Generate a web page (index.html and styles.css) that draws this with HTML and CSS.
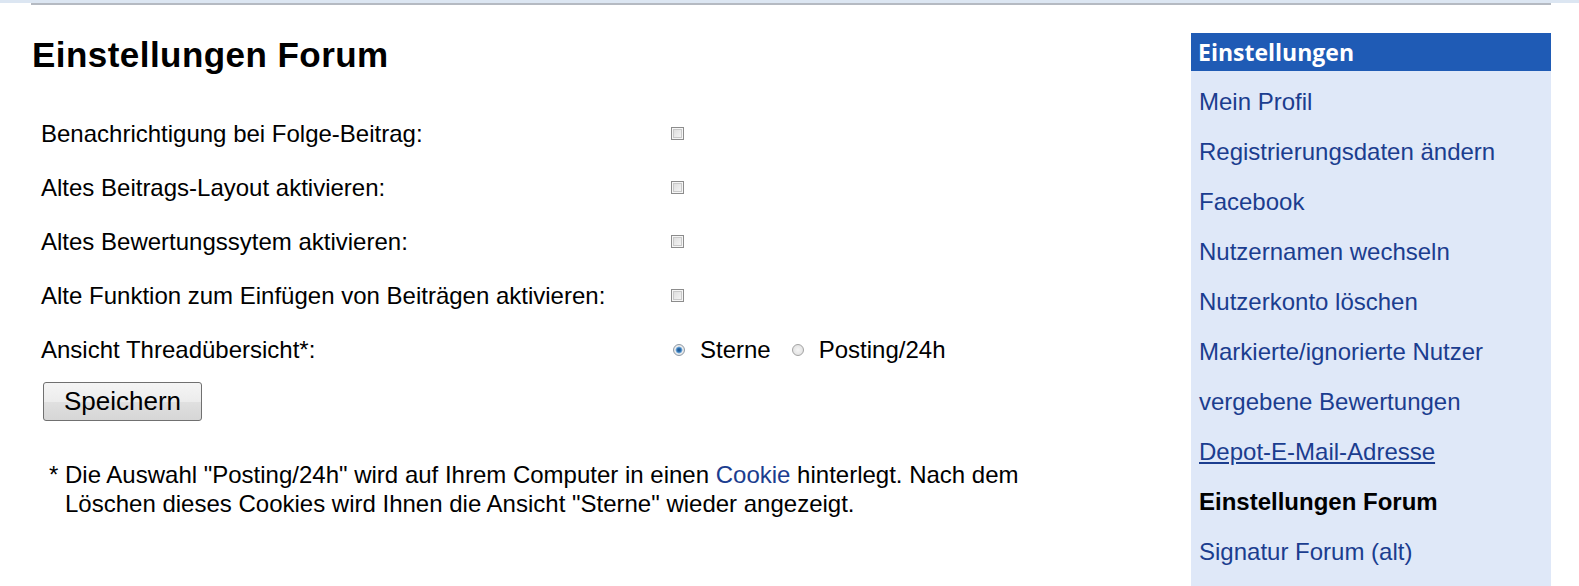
FILE: index.html
```html
<!DOCTYPE html>
<html lang="de">
<head>
<meta charset="utf-8">
<title>Einstellungen Forum</title>
<link rel="stylesheet" href="styles.css">
</head>
<body>
<div class="topbar"><div class="topbar-line"></div></div>
<div class="page">
  <main class="content">
    <h1 class="title">Einstellungen Forum</h1>
    <form class="settings">
      <div class="row">
        <span class="label">Benachrichtigung bei Folge-Beitrag:</span>
        <span class="control"><input type="checkbox" class="cb"></span>
      </div>
      <div class="row">
        <span class="label">Altes Beitrags-Layout aktivieren:</span>
        <span class="control"><input type="checkbox" class="cb"></span>
      </div>
      <div class="row">
        <span class="label">Altes Bewertungssytem aktivieren:</span>
        <span class="control"><input type="checkbox" class="cb"></span>
      </div>
      <div class="row">
        <span class="label">Alte Funktion zum Einfügen von Beiträgen aktivieren:</span>
        <span class="control"><input type="checkbox" class="cb"></span>
      </div>
      <div class="row">
        <span class="label">Ansicht Threadübersicht*:</span>
        <span class="control">
          <label class="opt"><input type="radio" name="view" class="rb" checked>Sterne</label>
          <label class="opt opt-second"><input type="radio" name="view" class="rb">Posting/24h</label>
        </span>
      </div>
      <button type="button" class="btn">Speichern</button>
    </form>
    <div class="note">
      <span class="note-mark">*</span>
      <p class="note-text">Die Auswahl "Posting/24h" wird auf Ihrem Computer in einen <a href="#" class="inline-link">Cookie</a> hinterlegt. Nach dem Löschen dieses Cookies wird Ihnen die Ansicht "Sterne" wieder angezeigt.</p>
    </div>
  </main>
  <aside class="sidebar">
    <div class="sidebar-head">Einstellungen</div>
    <ul class="menu">
      <li><a href="#" class="menu-link">Mein Profil</a></li>
      <li><a href="#" class="menu-link">Registrierungsdaten ändern</a></li>
      <li><a href="#" class="menu-link">Facebook</a></li>
      <li><a href="#" class="menu-link">Nutzernamen wechseln</a></li>
      <li><a href="#" class="menu-link">Nutzerkonto löschen</a></li>
      <li><a href="#" class="menu-link">Markierte/ignorierte Nutzer</a></li>
      <li><a href="#" class="menu-link">vergebene Bewertungen</a></li>
      <li><a href="#" class="menu-link menu-link-hover">Depot-E-Mail-Adresse</a></li>
      <li><span class="menu-current">Einstellungen Forum</span></li>
      <li><a href="#" class="menu-link">Signatur Forum (alt)</a></li>
    </ul>
  </aside>
</div>
</body>
</html>
```
FILE: styles.css
```css
html, body {
  margin: 0;
  padding: 0;
  background: #ffffff;
}

body {
  font-family: "Liberation Sans", Arial, sans-serif;
  color: #000000;
  overflow: hidden;
}

.topbar {
  border-top: 3px solid #dce6f2;
}

.topbar-line {
  height: 2px;
  margin: 0 28px 0 31px;
  background: #b5bac2;
}

.page {
  display: flex;
  min-height: 581px;
  padding-right: 28px;
}

.content {
  flex: 1;
  padding-left: 32px;
}

.title {
  margin: 0;
  padding-top: 30px;
  font-size: 35px;
  line-height: 40px;
  font-weight: bold;
  letter-spacing: 0.45px;
}

.settings {
  margin: 32px 0 0 0;
  padding-left: 9px;
}

.row {
  display: grid;
  grid-template-columns: 630px auto;
  align-items: center;
  height: 54px;
  font-size: 24px;
}

.control {
  display: flex;
  align-items: center;
}

.cb {
  -webkit-appearance: none;
  appearance: none;
  width: 13px;
  height: 13px;
  margin: 0 0 1px 0;
  border: 1px solid #8c8c8c;
  background: linear-gradient(135deg, #d9d9d9, #f9f9f9);
  box-shadow: inset 0 0 0 1px #f6f6f6, inset 0 0 0 2px #c9c9c9;
}

.opt {
  display: inline-flex;
  align-items: center;
}

.opt-second {
  margin-left: 19px;
}

.rb {
  -webkit-appearance: none;
  appearance: none;
  width: 12px;
  height: 12px;
  margin: 0 15px 0 2px;
  border-radius: 50%;
  border: 1px solid #a3a3a3;
  background: radial-gradient(circle, #f5f5f5 0, #dcdcdc 100%);
}

.rb:checked {
  border-color: #8e9aa6;
  background: radial-gradient(circle, #1d4f86 0, #2f74b5 2px, #8dbbe3 3.2px, #eeeeee 3.8px, #d6d6d6 100%);
}

.btn {
  display: block;
  margin: 5px 0 0 2px;
  height: 39px;
  padding: 0 20px;
  font-family: "Liberation Sans", Arial, sans-serif;
  font-size: 26px;
  line-height: 37px;
  color: #000000;
  border: 1px solid #707070;
  border-radius: 3px;
  background: linear-gradient(#f5f5f5 0%, #ececec 50%, #e0e0e0 51%, #d6d6d6 100%);
}

.note {
  display: flex;
  margin: 39px 0 0 17px;
  max-width: 985px;
  font-size: 24px;
  line-height: 29px;
}

.note-mark {
  flex: none;
  width: 16px;
}

.note-text {
  margin: 0;
}

.inline-link {
  color: #1b3d8f;
  text-decoration: none;
}

.sidebar {
  width: 360px;
  margin-top: 28px;
  background: #dfe8f8;
}

.sidebar-head {
  height: 38px;
  padding-left: 7px;
  background: #1f5bb5;
  color: #ffffff;
  font-family: "Open Sans", "DejaVu Sans", sans-serif;
  font-weight: bold;
  font-size: 23px;
  line-height: 38px;
}

.menu {
  list-style: none;
  margin: 0;
  padding: 6px 0 0 0;
}

.menu li {
  height: 50px;
  line-height: 50px;
  padding-left: 8px;
  font-size: 24px;
}

.menu-link {
  color: #1b3d8f;
  text-decoration: none;
}

.menu-link-hover {
  text-decoration: underline;
}

.menu-current {
  font-weight: bold;
  color: #000000;
}
```
